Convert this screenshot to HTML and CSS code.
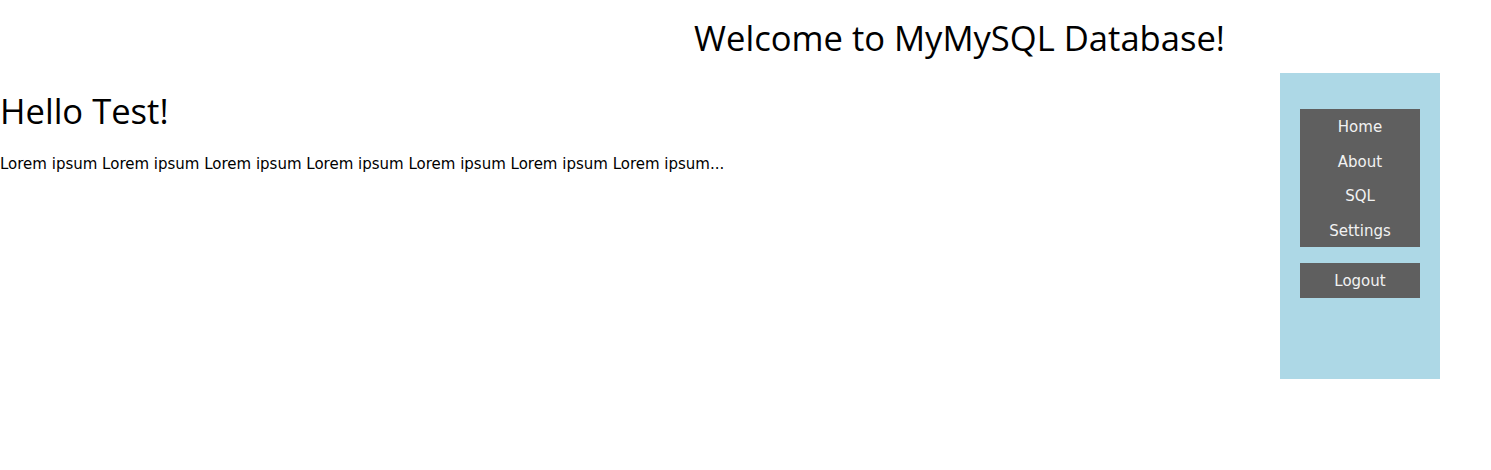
FILE: index.html
```html
<!DOCTYPE html>
<html lang="en">
<head>
<meta charset="utf-8">
<title>MyMySQL Database</title>
<link rel="stylesheet" href="styles.css">
</head>
<body>
<header class="site-header">
  <h1 class="site-title">Welcome to MyMySQL Database!</h1>
</header>
<div class="layout">
  <main class="content">
    <h2 class="greeting">Hello Test!</h2>
    <p class="text">Lorem ipsum Lorem ipsum Lorem ipsum Lorem ipsum Lorem ipsum Lorem ipsum Lorem ipsum...</p>
  </main>
  <aside class="sidebar">
    <nav class="menu">
      <a class="menu-item" href="#">Home</a>
      <a class="menu-item" href="#">About</a>
      <a class="menu-item" href="#">SQL</a>
      <a class="menu-item" href="#">Settings</a>
    </nav>
    <div class="menu logout">
      <a class="menu-item" href="#">Logout</a>
    </div>
  </aside>
</div>
</body>
</html>
```
FILE: styles.css
```css
html, body {
  margin: 0;
  padding: 0;
  background: #ffffff;
  color: #000000;
}
body {
  font-family: "DejaVu Sans", Verdana, sans-serif;
}
.site-header {
  display: flex;
  justify-content: flex-end;
  padding-right: 266px;
  height: 73px;
  align-items: flex-start;
}
.site-title {
  margin: 13px 0 0 0;
  font-family: "Open Sans", "Noto Sans", sans-serif;
  font-weight: 400;
  font-size: 34.6px;
  line-height: 50px;
  white-space: nowrap;
}
.layout {
  display: flex;
  align-items: flex-start;
}
.content {
  flex: 1;
}
.greeting {
  margin: 13px 0 0 0;
  font-family: "Open Sans", "Noto Sans", sans-serif;
  font-weight: 400;
  font-size: 34.6px;
  line-height: 50px;
}
.text {
  margin: 18px 0 0 0;
  font-size: 15px;
  line-height: 20px;
}
.sidebar {
  width: 160px;
  height: 306px;
  margin-right: 51px;
  background: #add8e6;
  box-sizing: border-box;
  padding: 36px 20px 0 20px;
  display: flex;
  flex-direction: column;
  gap: 16px;
}
.menu {
  background: #5f5f5f;
  display: flex;
  flex-direction: column;
}
.menu-item {
  display: block;
  height: 34.5px;
  line-height: 36.5px;
  text-align: center;
  color: #f2f2f2;
  text-decoration: none;
  font-size: 15px;
  overflow: hidden;
}
.logout .menu-item {
  height: 35px;
  line-height: 37px;
}
```
